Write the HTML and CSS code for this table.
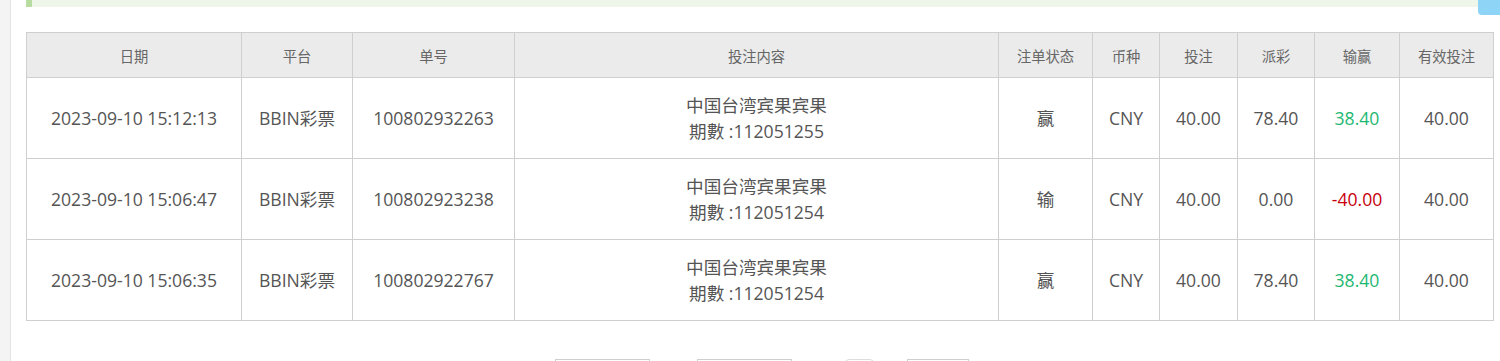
FILE: index.html
```html
<!DOCTYPE html>
<html lang="zh-CN">
<head>
<meta charset="utf-8">
<title>投注记录</title>
<link rel="stylesheet" href="styles.css">
</head>
<body>
<div class="page">
  <aside class="side"></aside>
  <main class="main">
    <div class="notice"></div>
    <a class="totop" href="#"></a>
    <table class="records">
      <colgroup>
        <col style="width:215px"><col style="width:111px"><col style="width:162px"><col style="width:484px"><col style="width:94px"><col style="width:67px"><col style="width:78px"><col style="width:77px"><col style="width:85px"><col style="width:94px">
      </colgroup>
      <thead>
        <tr><th>日期</th><th>平台</th><th>单号</th><th>投注内容</th><th>注单状态</th><th>币种</th><th>投注</th><th>派彩</th><th>输赢</th><th>有效投注</th></tr>
      </thead>
      <tbody>
        <tr><td>2023-09-10 15:12:13</td><td>BBIN彩票</td><td>100802932263</td><td class="content">中国台湾宾果宾果<br>期數 :112051255</td><td>赢</td><td>CNY</td><td>40.00</td><td>78.40</td><td class="win">38.40</td><td>40.00</td></tr>
        <tr><td>2023-09-10 15:06:47</td><td>BBIN彩票</td><td>100802923238</td><td class="content">中国台湾宾果宾果<br>期數 :112051254</td><td>输</td><td>CNY</td><td>40.00</td><td>0.00</td><td class="lose">-40.00</td><td>40.00</td></tr>
        <tr><td>2023-09-10 15:06:35</td><td>BBIN彩票</td><td>100802922767</td><td class="content">中国台湾宾果宾果<br>期數 :112051254</td><td>赢</td><td>CNY</td><td>40.00</td><td>78.40</td><td class="win">38.40</td><td>40.00</td></tr>
      </tbody>
    </table>
    <div class="pager">
      <span class="pbox wide"></span>
      <span class="pbox wide gap2"></span>
      <span class="pbox small gap3"></span>
      <span class="pbox mid gap4"></span>
    </div>
  </main>
</div>
</body>
</html>
```
FILE: styles.css
```css
html, body {
  margin: 0;
  padding: 0;
  background: #fff;
  font-family: "Open Sans", "Noto Sans CJK SC", sans-serif;
  overflow: hidden;
}
.page {
  display: flex;
  min-height: 361px;
}
.side {
  width: 10px;
  flex: none;
  background: #f4f4f4;
  border-right: 1px solid #e4e4e4;
}
.main {
  flex: 1;
  padding: 0 6px 0 15px;
  position: relative;
}
.notice {
  height: 7px;
  margin-right: 16px;
  background: #edf6e8;
  border-left: 6px solid #b8dca0;
}
.totop {
  position: absolute;
  right: 0;
  top: 0;
  width: 22px;
  height: 15px;
  background: #8ed4f6;
  border-bottom-left-radius: 4px;
}
.records {
  margin-top: 25px;
  width: 1468px;
  border-collapse: collapse;
  table-layout: fixed;
}
.records th, .records td {
  border: 1px solid #cfcfcf;
  text-align: center;
  vertical-align: middle;
  padding: 0;
}
.records th {
  height: 44px;
  background: #ebebeb;
  color: #666;
  font-size: 14.3px;
  font-weight: normal;
}
.records td {
  height: 80px;
  color: #555;
  font-size: 17.6px;
  line-height: 26.5px;
}
.records td.win { color: #1db872; }
.records td.lose { color: #c8000e; }
.pager {
  display: flex;
  margin-top: 38px;
  padding-left: 529px;
}
.pbox {
  height: 28px;
  border: 1px solid #cfcfcf;
  box-sizing: border-box;
}
.pbox.wide { width: 95px; }
.pbox.gap2 { margin-left: 47px; }
.pbox.small { width: 29px; margin-left: 53px; border-radius: 4px; border-color: #ddd; }
.pbox.mid { width: 62px; margin-left: 33px; }
```
